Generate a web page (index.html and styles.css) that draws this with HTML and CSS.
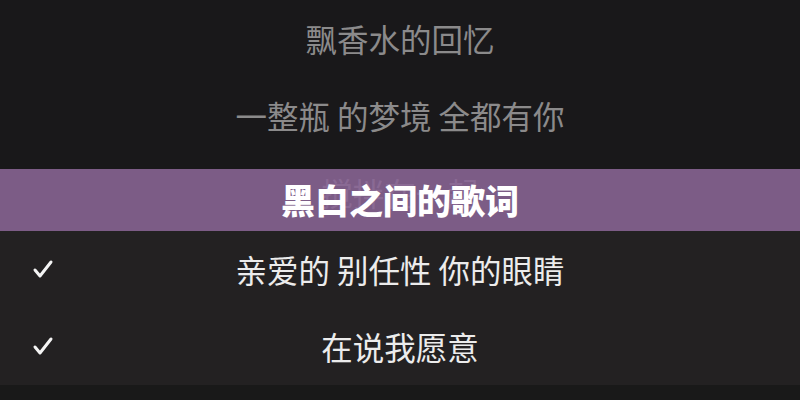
FILE: index.html
```html
<!DOCTYPE html>
<html lang="zh-CN">
<head>
    <meta charset="UTF-8">
    <meta name="viewport" content="width=device-width, initial-scale=1.0">
    <title>黑白之间的歌词</title>
    <link rel="stylesheet" href="styles.css">
</head>
<body>
    <div class="screen">
        <!-- Lyrics still to come -->
        <div class="lyrics upcoming">
            <p class="line">飘香水的回忆</p>
            <p class="line">一整瓶 的梦境 全都有你</p>
            <p class="line">搅拌在一起</p>
        </div>

        <!-- Selected lyrics -->
        <div class="lyrics picked">
            <div class="line">
                <svg class="check" viewBox="0 0 22 20"><path d="M3 11 L8 17 L19 3"/></svg>
                <span>亲爱的 别任性 你的眼睛</span>
            </div>
            <div class="line">
                <svg class="check" viewBox="0 0 22 20"><path d="M3 11 L8 17 L19 3"/></svg>
                <span>在说我愿意</span>
            </div>
        </div>

        <div class="footer"></div>

        <!-- Title banner over the lyrics -->
        <div class="banner">
            <h1>黑白之间的歌词</h1>
        </div>
    </div>
</body>
</html>
```

FILE: styles.css
```css
body {
    margin: 0;
    padding: 0;
    background-color: #191919;
    font-family: "Noto Sans CJK SC", "Noto Sans", sans-serif;
}
.screen {
    position: relative;
    width: 800px;
    height: 400px;
    overflow: hidden;
}
.lyrics {
    display: flex;
    flex-direction: column;
}
.upcoming {
    background: #19181a;
    color: #8b8a8b;
}
.picked {
    background: #232122;
    color: #ececec;
}
.line {
    position: relative;
    height: 77px;
    margin: 0;
    display: flex;
    align-items: center;
    justify-content: center;
    font-size: 31.5px;
    line-height: 1;
}
.check {
    position: absolute;
    left: 32px;
    top: 28px;
    width: 22px;
    height: 20px;
    fill: none;
    stroke: #f4f4f4;
    stroke-width: 3;
    stroke-linecap: round;
    stroke-linejoin: round;
}
.footer {
    height: 15px;
    background: #191919;
}
.banner {
    position: absolute;
    left: 0;
    right: 0;
    top: 169px;
    height: 62px;
    background: rgba(138, 101, 149, 0.88);
    display: flex;
    align-items: center;
    justify-content: center;
}
.banner h1 {
    margin: 0;
    color: #ffffff;
    font-size: 34px;
    font-weight: 900;
    line-height: 1;
}
```
